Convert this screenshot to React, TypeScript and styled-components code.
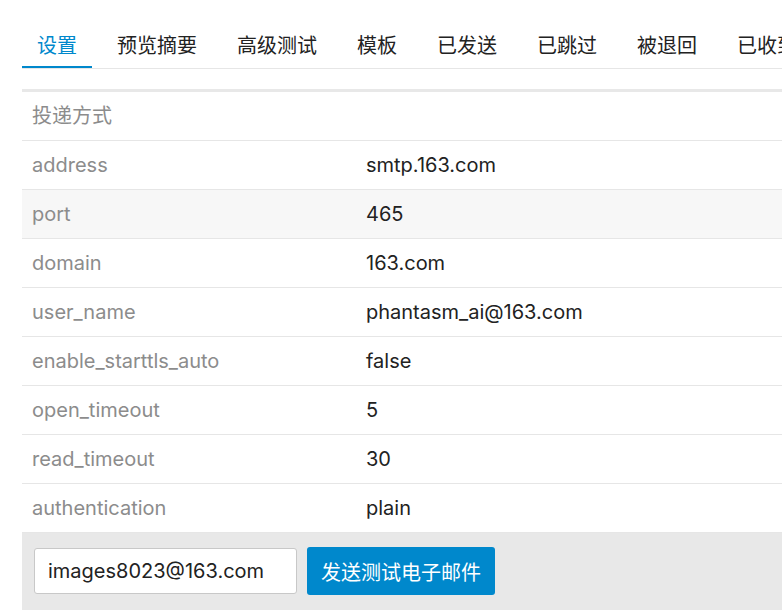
import React from 'react';
import styled, { createGlobalStyle } from 'styled-components';

const GlobalStyle = createGlobalStyle`
  html, body {
    margin: 0;
    padding: 0;
    background: #fff;
    overflow: hidden;
  }
  body {
    font-family: Inter, "Noto Sans CJK SC", sans-serif;
    color: #222;
  }
`;

const Page = styled.div`
  width: 1100px;
  padding: 24px 22px 0;
`;

const TabBar = styled.div`
  display: flex;
  gap: 10px;
  border-bottom: 1px solid #e6e6e6;
  white-space: nowrap;
`;

const Tab = styled.div<{ active?: boolean }>`
  padding: 9px 15px;
  font-size: 20px;
  line-height: 24px;
  font-family: "Noto Sans CJK SC", sans-serif;
  color: ${(p) => (p.active ? '#0088cc' : '#222')};
  border-bottom: 2px solid ${(p) => (p.active ? '#0088cc' : 'transparent')};
`;

const Table = styled.div`
  margin-top: 20px;
  border-top: 3px solid #e8e8e8;
`;

const Row = styled.div<{ striped?: boolean }>`
  display: grid;
  grid-template-columns: 334px 1fr;
  height: 48px;
  align-items: center;
  border-bottom: 1px solid #e6e6e6;
  background: ${(p) => (p.striped ? '#f7f7f7' : '#fff')};
  font-size: 20px;
`;

const Label = styled.div`
  padding: 0 10px;
  color: #8c8c8c;
`;

const Heading = styled(Label)`
  font-family: "Noto Sans CJK SC", sans-serif;
  line-height: 24px;
  padding-bottom: 2px;
`;

const Value = styled.div`
  padding: 0 10px;
  color: #222;
`;

const Footer = styled.div`
  display: flex;
  align-items: center;
  gap: 10px;
  background: #e8e8e8;
  padding: 14px 12px 20px;
`;

const EmailInput = styled.input`
  box-sizing: border-box;
  width: 263px;
  height: 46px;
  padding: 0 13px;
  border: 1px solid #c8c8c8;
  border-radius: 3px;
  background: #fff;
  font-family: Inter, sans-serif;
  font-size: 20px;
  color: #222;
  outline: none;
`;

const SendButton = styled.button`
  height: 48px;
  padding: 0 14px;
  border: none;
  border-radius: 3px;
  background: #0088cc;
  color: #fff;
  font-family: "Noto Sans CJK SC", sans-serif;
  font-size: 20px;
`;

const tabs = ['设置', '预览摘要', '高级测试', '模板', '已发送', '已跳过', '被退回', '已收到'];

const settings: [string, string][] = [
  ['address', 'smtp.163.com'],
  ['port', '465'],
  ['domain', '163.com'],
  ['user_name', 'phantasm_ai@163.com'],
  ['enable_starttls_auto', 'false'],
  ['open_timeout', '5'],
  ['read_timeout', '30'],
  ['authentication', 'plain'],
];

const App = () => {
  return (
    <Page>
      <GlobalStyle />
      <TabBar>
        {tabs.map((t, i) => (
          <Tab key={t} active={i === 0}>
            {t}
          </Tab>
        ))}
      </TabBar>
      <Table>
        <Row>
          <Heading>投递方式</Heading>
          <Value />
        </Row>
        {settings.map(([k, v]) => (
          <Row key={k} striped={k === 'port'}>
            <Label>{k}</Label>
            <Value>{v}</Value>
          </Row>
        ))}
      </Table>
      <Footer>
        <EmailInput defaultValue="images8023@163.com" />
        <SendButton>发送测试电子邮件</SendButton>
      </Footer>
    </Page>
  );
};

export default App;
